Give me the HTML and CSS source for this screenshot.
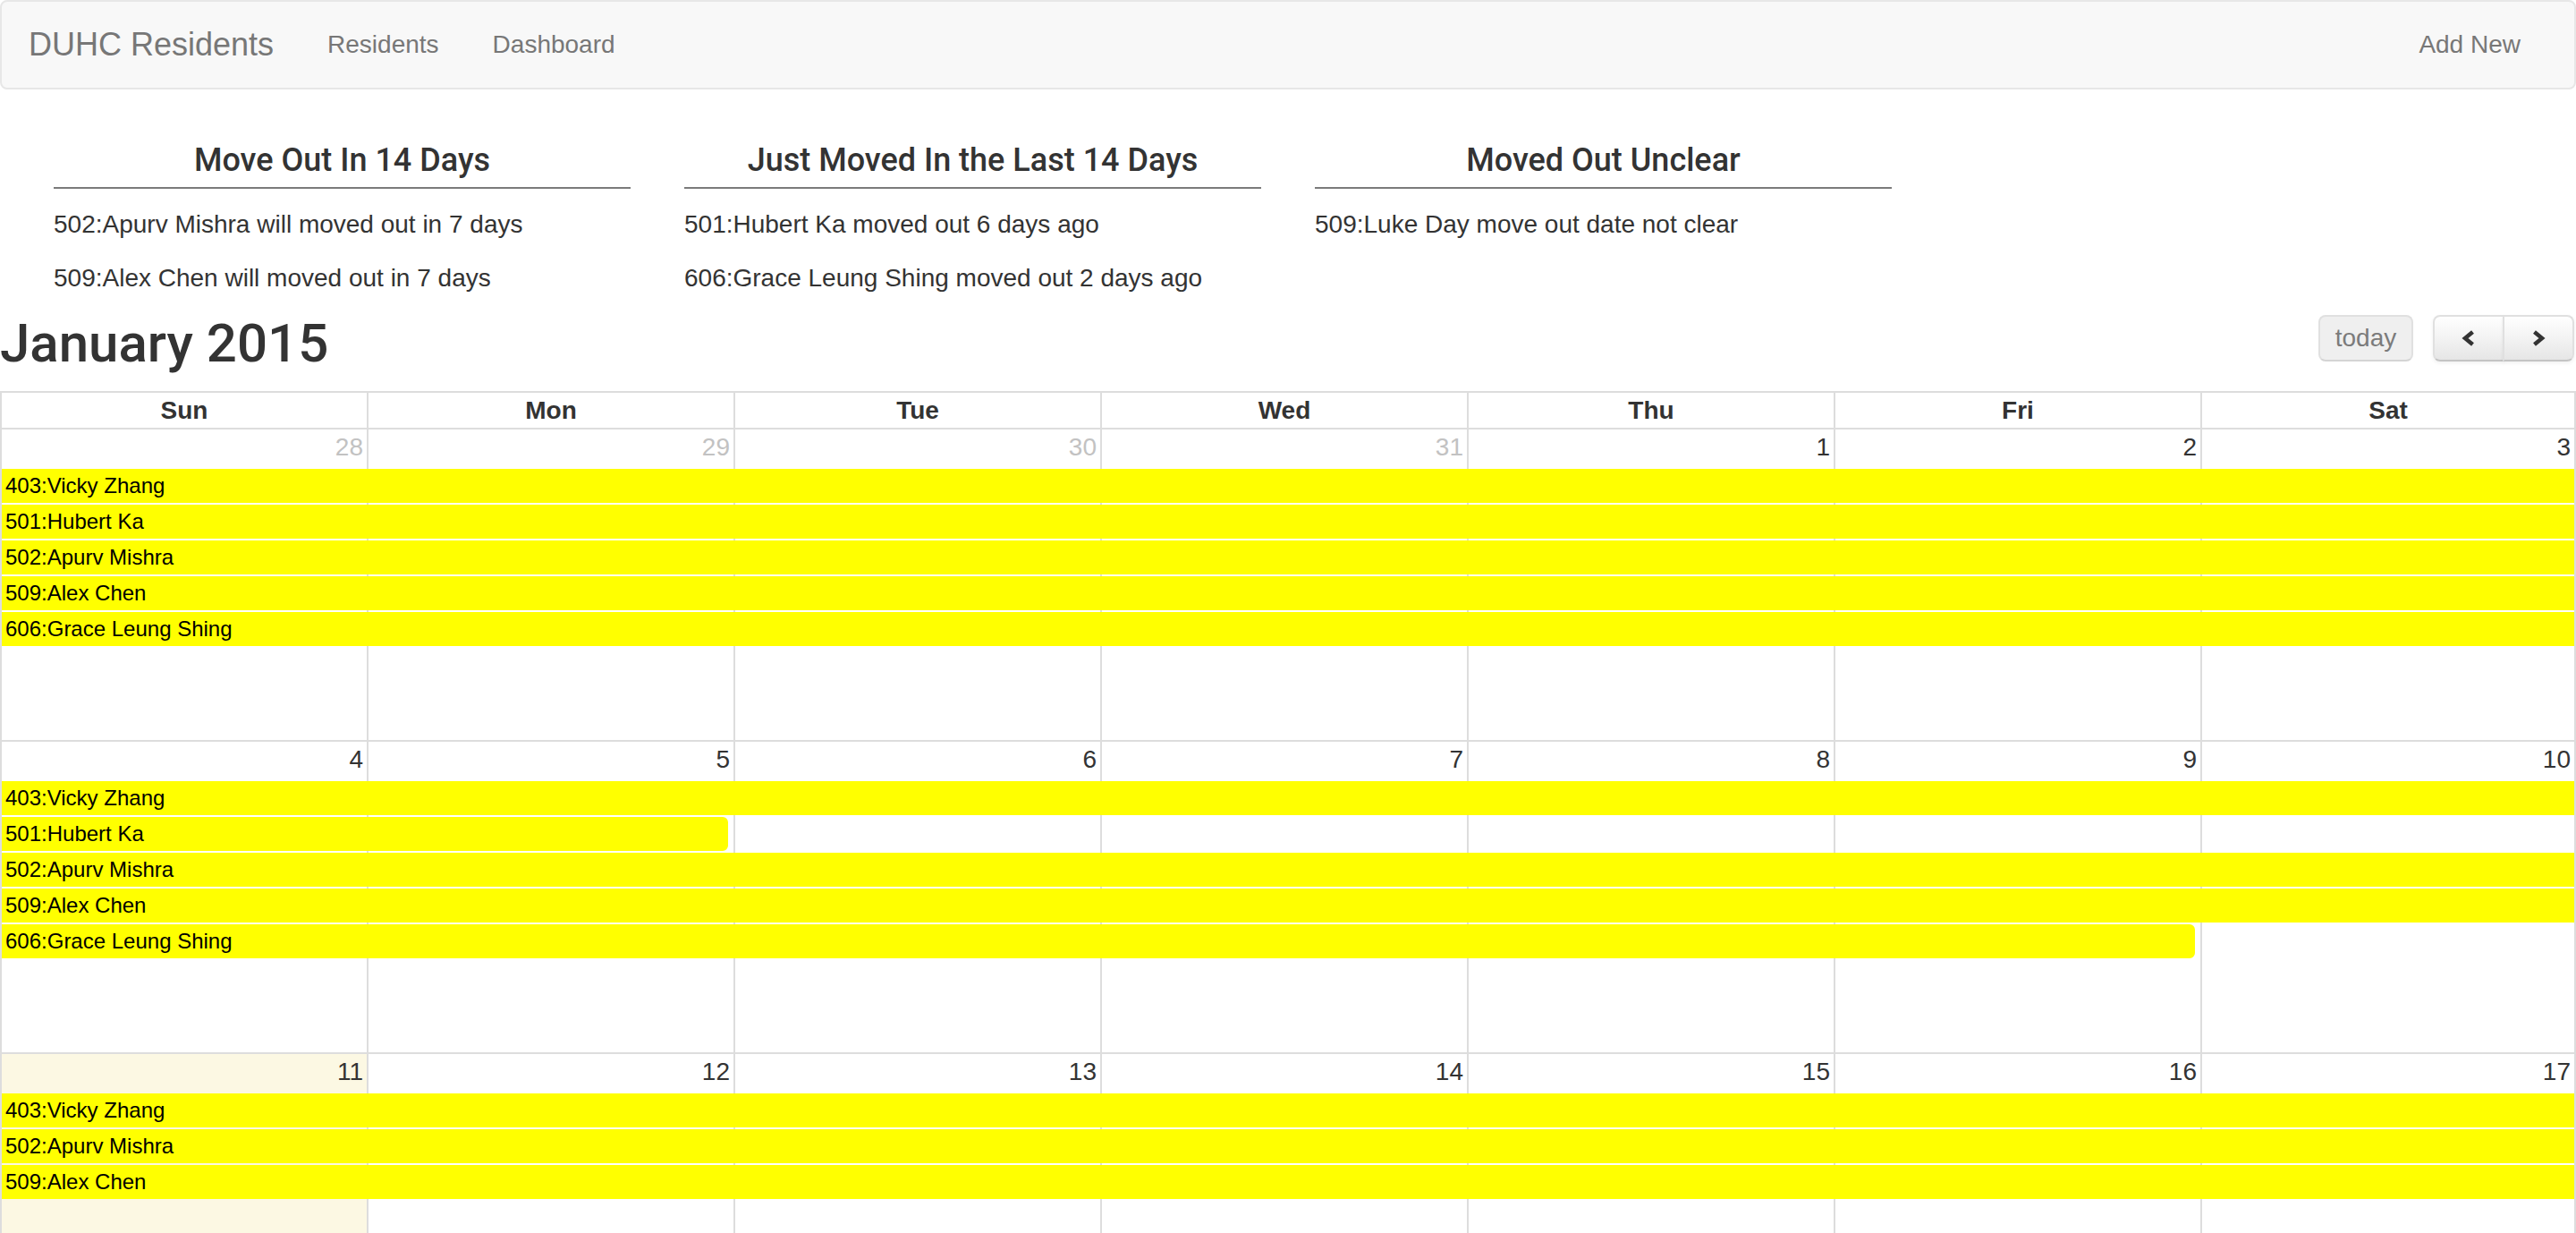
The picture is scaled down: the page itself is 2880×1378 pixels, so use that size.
FILE: index.html
```html
<!DOCTYPE html>
<html lang="en">
<head>
<meta charset="utf-8">
<title>DUHC Residents</title>
<link rel="stylesheet" href="styles.css">
</head>
<body>
<nav class="navbar">
  <a class="brand" href="#">DUHC Residents</a>
  <ul class="nav">
    <li><a href="#">Residents</a></li>
    <li><a href="#">Dashboard</a></li>
  </ul>
  <ul class="nav nav-right">
    <li><a href="#">Add New</a></li>
  </ul>
</nav>

<div class="summary">
  <section class="summary-col">
    <h4>Move Out In 14 Days</h4>
    <p>502:Apurv Mishra will moved out in 7 days</p>
    <p>509:Alex Chen will moved out in 7 days</p>
  </section>
  <section class="summary-col">
    <h4>Just Moved In the Last 14 Days</h4>
    <p>501:Hubert Ka moved out 6 days ago</p>
    <p>606:Grace Leung Shing moved out 2 days ago</p>
  </section>
  <section class="summary-col">
    <h4>Moved Out Unclear</h4>
    <p>509:Luke Day move out date not clear</p>
  </section>
</div>

<div class="calendar">
  <div class="toolbar">
    <h2>January 2015</h2>
    <div class="toolbar-right">
      <button class="fc-btn fc-today" disabled>today</button>
      <div class="btn-group">
        <button class="fc-btn fc-arrow" aria-label="prev"><svg width="18" height="20" viewBox="0 0 18 20"><polyline points="13.5,3 5,10 13.5,17" fill="none" stroke="#333" stroke-width="4.5"/></svg></button>
        <button class="fc-btn fc-arrow" aria-label="next"><svg width="18" height="20" viewBox="0 0 18 20"><polyline points="4.5,3 13,10 4.5,17" fill="none" stroke="#333" stroke-width="4.5"/></svg></button>
      </div>
    </div>
  </div>

  <div class="cal-head">
    <div class="head-cell">Sun</div>
    <div class="head-cell">Mon</div>
    <div class="head-cell">Tue</div>
    <div class="head-cell">Wed</div>
    <div class="head-cell">Thu</div>
    <div class="head-cell">Fri</div>
    <div class="head-cell">Sat</div>
  </div>

  <div class="week">
    <div class="day other"><span class="num">28</span></div>
    <div class="day other"><span class="num">29</span></div>
    <div class="day other"><span class="num">30</span></div>
    <div class="day other"><span class="num">31</span></div>
    <div class="day"><span class="num">1</span></div>
    <div class="day"><span class="num">2</span></div>
    <div class="day"><span class="num">3</span></div>
    <div class="event" style="grid-column:1/8;grid-row:2">403:Vicky Zhang</div>
    <div class="event" style="grid-column:1/8;grid-row:3">501:Hubert Ka</div>
    <div class="event" style="grid-column:1/8;grid-row:4">502:Apurv Mishra</div>
    <div class="event" style="grid-column:1/8;grid-row:5">509:Alex Chen</div>
    <div class="event" style="grid-column:1/8;grid-row:6">606:Grace Leung Shing</div>
  </div>

  <div class="week">
    <div class="day"><span class="num">4</span></div>
    <div class="day"><span class="num">5</span></div>
    <div class="day"><span class="num">6</span></div>
    <div class="day"><span class="num">7</span></div>
    <div class="day"><span class="num">8</span></div>
    <div class="day"><span class="num">9</span></div>
    <div class="day"><span class="num">10</span></div>
    <div class="event" style="grid-column:1/8;grid-row:2">403:Vicky Zhang</div>
    <div class="event event-end" style="grid-column:1/3;grid-row:3">501:Hubert Ka</div>
    <div class="event" style="grid-column:1/8;grid-row:4">502:Apurv Mishra</div>
    <div class="event" style="grid-column:1/8;grid-row:5">509:Alex Chen</div>
    <div class="event event-end" style="grid-column:1/7;grid-row:6">606:Grace Leung Shing</div>
  </div>

  <div class="week">
    <div class="day today"><span class="num">11</span></div>
    <div class="day"><span class="num">12</span></div>
    <div class="day"><span class="num">13</span></div>
    <div class="day"><span class="num">14</span></div>
    <div class="day"><span class="num">15</span></div>
    <div class="day"><span class="num">16</span></div>
    <div class="day"><span class="num">17</span></div>
    <div class="event" style="grid-column:1/8;grid-row:2">403:Vicky Zhang</div>
    <div class="event" style="grid-column:1/8;grid-row:3">502:Apurv Mishra</div>
    <div class="event" style="grid-column:1/8;grid-row:4">509:Alex Chen</div>
  </div>

  <div class="week">
    <div class="day"><span class="num">18</span></div>
    <div class="day"><span class="num">19</span></div>
    <div class="day"><span class="num">20</span></div>
    <div class="day"><span class="num">21</span></div>
    <div class="day"><span class="num">22</span></div>
    <div class="day"><span class="num">23</span></div>
    <div class="day"><span class="num">24</span></div>
  </div>

  <div class="week">
    <div class="day"><span class="num">25</span></div>
    <div class="day"><span class="num">26</span></div>
    <div class="day"><span class="num">27</span></div>
    <div class="day"><span class="num">28</span></div>
    <div class="day"><span class="num">29</span></div>
    <div class="day"><span class="num">30</span></div>
    <div class="day"><span class="num">31</span></div>
  </div>
</div>
</body>
</html>
```

FILE: styles.css
```css
* {
  box-sizing: border-box;
}

html, body {
  margin: 0;
  padding: 0;
  background: #fff;
}

body {
  font-family: "Liberation Sans", Arial, Helvetica, sans-serif;
  font-size: 28px;
  line-height: 40px;
  color: #333;
}

a {
  text-decoration: none;
}

/* ---------- Navbar ---------- */
.navbar {
  display: flex;
  align-items: center;
  height: 100px;
  margin-bottom: 40px;
  padding: 0 30px 0 0;
  background: #f8f8f8;
  border: 2px solid #e7e7e7;
  border-radius: 8px;
}

.brand {
  padding: 0 30px;
  font-size: 36px;
  line-height: 40px;
  color: #777;
}

.nav {
  display: flex;
  margin: 0;
  padding: 0;
  list-style: none;
}

.nav a {
  display: block;
  padding: 0 30px;
  font-size: 28px;
  line-height: 40px;
  color: #777;
}

.nav-right {
  margin-left: auto;
}

/* ---------- Summary lists ---------- */
.summary {
  display: grid;
  grid-template-columns: repeat(4, 1fr);
  padding: 0 30px;
}

.summary-col {
  padding: 0 30px;
}

.summary-col h4 {
  margin: 20px 0 20px;
  padding-bottom: 10px;
  font-family: Roboto, "Liberation Sans", Arial, sans-serif;
  font-size: 36px;
  line-height: 39px;
  font-weight: 500;
  text-align: center;
  color: #333;
  border-bottom: 2px solid #7b7b7b;
}

.summary-col p {
  margin: 0 0 20px;
  font-size: 28px;
  line-height: 40px;
}

/* ---------- Calendar ---------- */
.calendar {
  width: 100%;
}

.toolbar {
  display: flex;
  justify-content: space-between;
  align-items: flex-start;
  margin-bottom: 20px;
}

.toolbar h2 {
  margin: 0;
  font-family: Roboto, "Liberation Sans", Arial, sans-serif;
  font-size: 60px;
  line-height: 66px;
  font-weight: 500;
  color: #333;
}

.toolbar-right {
  display: flex;
  gap: 22px;
  margin-top: 1px;
  padding-right: 2px;
}

.fc-btn {
  display: flex;
  align-items: center;
  justify-content: center;
  height: 52px;
  margin: 0;
  padding: 0 17px;
  font-family: inherit;
  font-size: 28px;
  color: #333;
  border: 2px solid;
  border-color: #e0e0e0 #e0e0e0 #c4c4c4;
  border-radius: 8px;
  background: linear-gradient(to bottom, #ffffff, #e6e6e6);
  box-shadow: 0 2px 4px rgba(0, 0, 0, 0.06);
}

.fc-today {
  width: 106px;
  color: #7b7b7b;
  background: #efefef;
  border-color: #e0e0e0 #e0e0e0 #d4d4d4;
  box-shadow: none;
}

.btn-group {
  display: flex;
}

.fc-arrow {
  width: 80px;
  padding: 0;
}

.btn-group .fc-arrow:first-child {
  border-top-right-radius: 0;
  border-bottom-right-radius: 0;
}

.btn-group .fc-arrow:last-child {
  margin-left: -2px;
  border-top-left-radius: 0;
  border-bottom-left-radius: 0;
}

.cal-head,
.week {
  display: grid;
  grid-template-columns: repeat(6, 410fr) 420fr;
}

.cal-head {
  border-top: 2px solid #ddd;
  border-bottom: 2px solid #ddd;
}

.head-cell {
  font-weight: bold;
  text-align: center;
  line-height: 39px;
  border-left: 2px solid #ddd;
}

.head-cell:last-child {
  border-right: 2px solid #ddd;
}

.week {
  grid-template-rows: 42px repeat(5, 40px) 1fr;
  height: 349px;
  border-bottom: 2px solid #ddd;
}

.day {
  grid-row: 1 / -1;
  border-left: 2px solid #ddd;
  text-align: right;
}

.day:nth-child(1) { grid-column: 1; }
.day:nth-child(2) { grid-column: 2; }
.day:nth-child(3) { grid-column: 3; }
.day:nth-child(4) { grid-column: 4; }
.day:nth-child(5) { grid-column: 5; }
.day:nth-child(6) { grid-column: 6; }
.day:nth-child(7) { grid-column: 7; border-right: 2px solid #ddd; }

.day.today {
  background: #fcf8e3;
}

.num {
  display: block;
  padding-right: 4px;
  font-size: 28px;
  line-height: 40px;
  color: #333;
}

.day.other .num {
  color: #c2c2c2;
}

.event {
  height: 38px;
  margin: 2px 2px 0 2px;
  padding: 0 2px;
  font-size: 24px;
  line-height: 34px;
  color: #000;
  background: #ffff00;
  border: 2px solid #ffff00;
  white-space: nowrap;
  overflow: hidden;
}

.event-end {
  margin-right: 6px;
  border-top-right-radius: 6px;
  border-bottom-right-radius: 6px;
}
```
